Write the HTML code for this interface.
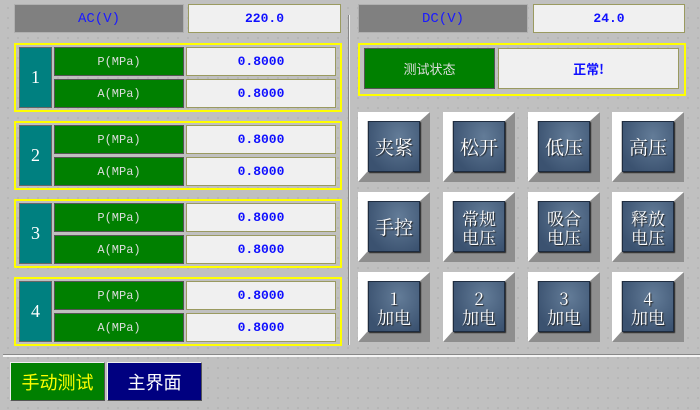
<!DOCTYPE html>
<html><head><meta charset="utf-8"><style>
*{margin:0;padding:0;box-sizing:border-box}
body{width:700px;height:410px;overflow:hidden;background:#c0c0c0;
background-image:radial-gradient(circle,#9a9a9a 0.6px,transparent 0.8px);background-size:10px 10px;background-position:3px 3px;
font-family:"Liberation Serif","Noto Serif CJK SC",serif;position:relative}
.a{position:absolute;display:flex;align-items:center;justify-content:center}
.lab{background:#808080;color:#1a1aff;font-size:14px;font-family:"Liberation Mono","Noto Serif CJK SC",monospace;border:1px solid #b0b0b0}
.val{background:#f0f0f0;color:#1010ff;font-size:13px;font-weight:bold;font-family:"Liberation Mono","Noto Sans CJK SC",monospace;border:1px solid #9a9a60}
.grp{position:absolute;border:2px solid #ffff00}
.num{background:#008080;color:#fff;font-size:18px;border:1px solid #666}
.gl{background:#008000;color:#ddd;font-size:12px;font-family:"Liberation Mono",monospace;border:1px solid #555}
.btn{position:absolute;width:72px;height:70px;border-style:solid;border-width:9px 10px 10px 9px;border-color:#fff #8e8e8e #8e8e8e #fff;background:#c8c8c8}
.btn div{position:absolute;left:1px;top:0;width:52px;height:51px;background:radial-gradient(ellipse at 60% 30%,#637c98,#3b5270 80%);border:1px solid #1e2c40;box-shadow:1px 1px 1px #222;color:#fff;font-family:"Noto Serif CJK SC",serif;font-size:19px;line-height:21px;display:flex;align-items:center;justify-content:center;text-align:center;text-shadow:1px 1px 1px #222}
.btn div.s{font-size:17px;line-height:19px}
</style></head><body>
<div class="a lab" style="left:14px;top:4px;width:170px;height:29px">AC(V)</div>
<div class="a val" style="left:188px;top:4px;width:153px;height:29px">220.0</div>
<div class="a lab" style="left:358px;top:4px;width:170px;height:29px">DC(V)</div>
<div class="a val" style="left:533px;top:4px;width:152px;height:29px">24.0</div>

<div style="position:absolute;left:348px;top:15px;width:2px;height:330px;background:#eee;border-left:1px solid #888"></div>

<div class="grp" style="left:14px;top:43px;width:328px;height:69px"></div>
<div class="a num" style="left:19px;top:47px;width:33px;height:61px">1</div>
<div class="a gl" style="left:54px;top:47px;width:130px;height:29px">P(MPa)</div>
<div class="a gl" style="left:54px;top:79px;width:130px;height:29px">A(MPa)</div>
<div class="a val" style="left:186px;top:47px;width:150px;height:29px">0.8000</div>
<div class="a val" style="left:186px;top:79px;width:150px;height:29px">0.8000</div>

<div class="grp" style="left:14px;top:121px;width:328px;height:69px"></div>
<div class="a num" style="left:19px;top:125px;width:33px;height:61px">2</div>
<div class="a gl" style="left:54px;top:125px;width:130px;height:29px">P(MPa)</div>
<div class="a gl" style="left:54px;top:157px;width:130px;height:29px">A(MPa)</div>
<div class="a val" style="left:186px;top:125px;width:150px;height:29px">0.8000</div>
<div class="a val" style="left:186px;top:157px;width:150px;height:29px">0.8000</div>

<div class="grp" style="left:14px;top:199px;width:328px;height:69px"></div>
<div class="a num" style="left:19px;top:203px;width:33px;height:61px">3</div>
<div class="a gl" style="left:54px;top:203px;width:130px;height:29px">P(MPa)</div>
<div class="a gl" style="left:54px;top:235px;width:130px;height:29px">A(MPa)</div>
<div class="a val" style="left:186px;top:203px;width:150px;height:29px">0.8000</div>
<div class="a val" style="left:186px;top:235px;width:150px;height:29px">0.8000</div>

<div class="grp" style="left:14px;top:277px;width:328px;height:69px"></div>
<div class="a num" style="left:19px;top:281px;width:33px;height:61px">4</div>
<div class="a gl" style="left:54px;top:281px;width:130px;height:29px">P(MPa)</div>
<div class="a gl" style="left:54px;top:313px;width:130px;height:29px">A(MPa)</div>
<div class="a val" style="left:186px;top:281px;width:150px;height:29px">0.8000</div>
<div class="a val" style="left:186px;top:313px;width:150px;height:29px">0.8000</div>

<div class="grp" style="left:358px;top:43px;width:328px;height:53px"></div>
<div class="a gl" style="left:364px;top:48px;width:131px;height:41px;font-size:13px;font-family:'Noto Sans CJK SC',sans-serif">测试状态</div>
<div class="a val" style="left:498px;top:48px;width:181px;height:41px;font-size:13px;font-family:'Noto Sans CJK SC',sans-serif">正常!</div>

<div class="btn" style="left:358px;top:112px"><div>夹紧</div></div>
<div class="btn" style="left:443px;top:112px"><div>松开</div></div>
<div class="btn" style="left:528px;top:112px"><div>低压</div></div>
<div class="btn" style="left:612px;top:112px"><div>高压</div></div>
<div class="btn" style="left:358px;top:192px"><div>手控</div></div>
<div class="btn" style="left:443px;top:192px"><div class="s">常规<br>电压</div></div>
<div class="btn" style="left:528px;top:192px"><div class="s">吸合<br>电压</div></div>
<div class="btn" style="left:612px;top:192px"><div class="s">释放<br>电压</div></div>
<div class="btn" style="left:358px;top:272px"><div class="s">1<br>加电</div></div>
<div class="btn" style="left:443px;top:272px"><div class="s">2<br>加电</div></div>
<div class="btn" style="left:528px;top:272px"><div class="s">3<br>加电</div></div>
<div class="btn" style="left:612px;top:272px"><div class="s">4<br>加电</div></div>

<div style="position:absolute;left:3px;top:354px;width:697px;height:3px;background:#f4f4f4;border-top:1px solid #888"></div>
<div class="a" style="left:10px;top:362px;width:95px;height:39px;background:#008000;color:#ffff00;font-size:18px;font-family:'Noto Sans CJK SC',sans-serif;border:1px solid #eee;border-right-color:#555;border-bottom-color:#555">手动测试</div>
<div class="a" style="left:107px;top:362px;width:95px;height:39px;background:#000080;color:#fff;font-size:18px;font-family:'Noto Sans CJK SC',sans-serif;border:1px solid #eee;border-right-color:#555;border-bottom-color:#555">主界面</div>
</body></html>
